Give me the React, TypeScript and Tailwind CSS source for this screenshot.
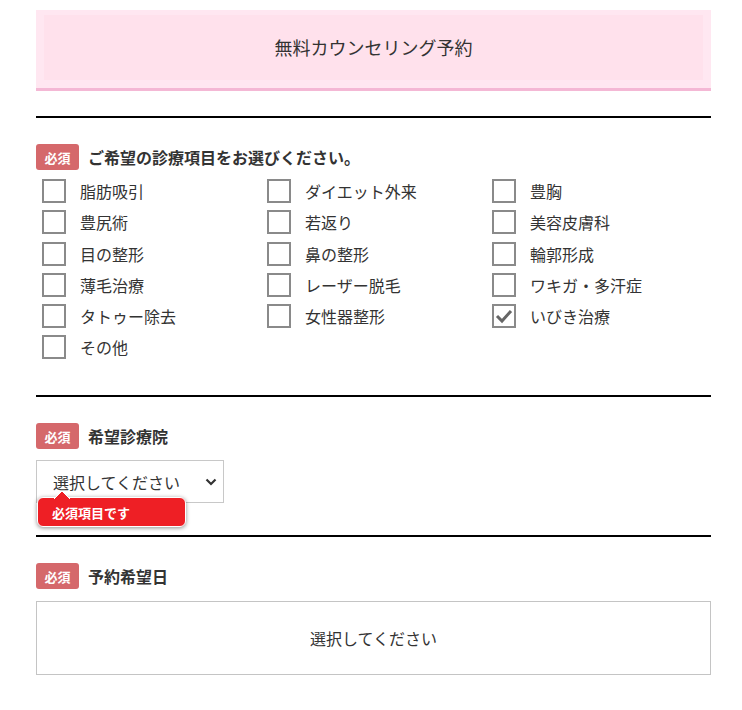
import React from "react";

const items = [
  { label: "脂肪吸引" },
  { label: "ダイエット外来" },
  { label: "豊胸" },
  { label: "豊尻術" },
  { label: "若返り" },
  { label: "美容皮膚科" },
  { label: "目の整形" },
  { label: "鼻の整形" },
  { label: "輪郭形成" },
  { label: "薄毛治療" },
  { label: "レーザー脱毛" },
  { label: "ワキガ・多汗症" },
  { label: "タトゥー除去" },
  { label: "女性器整形" },
  { label: "いびき治療", checked: true },
  { label: "その他" },
];

function Badge() {
  return (
    <span className="inline-flex items-center justify-center w-[43px] h-[26px] rounded-[3px] bg-[#d5686b] text-white text-[13px] font-bold leading-none">
      必須
    </span>
  );
}

function Heading({ text }: { text: string }) {
  return (
    <div className="flex items-center h-[26px] gap-[9px]">
      <Badge />
      <span className="text-[16px] font-bold text-[#333] leading-none">{text}</span>
    </div>
  );
}

function Checkbox({ checked }: { checked?: boolean }) {
  return (
    <span className="w-[24px] h-[24px] border-2 border-[#8a8a8a] bg-white flex items-center justify-center shrink-0">
      {checked && (
        <svg width="20" height="20" viewBox="0 0 20 20">
          <polyline points="3,10 8,15 17,5" fill="none" stroke="#666" strokeWidth="3" />
        </svg>
      )}
    </span>
  );
}

export default function App() {
  return (
    <div
      className="bg-white min-h-[710px] text-[#333]"
      style={{ fontFamily: '"Noto Sans CJK JP", "Noto Sans", sans-serif' }}
    >
      <div className="ml-[36px] w-[675px] pt-[10px]">
        <div className="bg-[#ffe7f1] border-b-[3px] border-[#f4b8d5] pt-[5px] px-[8px] pb-[8px]">
          <div className="bg-[#ffe1ec] h-[65px] flex items-center justify-center text-[18px] text-[#333]">
            無料カウンセリング予約
          </div>
        </div>

        <div className="mt-[25px] h-[2px] bg-black" />

        <div className="pt-[26px] pb-[36px]">
          <Heading text="ご希望の診療項目をお選びください。" />
          <div className="mt-[9px] grid grid-cols-3 gap-y-[7.25px]">
            {items.map((it) => (
              <div key={it.label} className="flex items-center h-[24px] pl-[6px]">
                <Checkbox checked={it.checked} />
                <span className="ml-[14px] text-[16px] text-[#333] leading-none">{it.label}</span>
              </div>
            ))}
          </div>
        </div>

        <div className="h-[2px] bg-black" />

        <div className="pt-[26px] pb-[32px]">
          <Heading text="希望診療院" />
          <div className="relative mt-[11px] w-[188px] h-[43px]">
            <div className="w-full h-full border border-[#c8c8c8] bg-white flex items-center justify-between pl-[16px] pr-[6px]">
              <span className="text-[16px] text-[#333]">選択してください</span>
              <svg width="12" height="8" viewBox="0 0 12 8">
                <polyline points="1.5,1.5 6,6 10.5,1.5" fill="none" stroke="#333" strokeWidth="2.2" />
              </svg>
            </div>
            <div className="absolute left-[1px] top-[37px] w-[149px] h-[30px] rounded-[6px] bg-[#ee1f25] border border-white shadow-[0_1px_4px_rgba(0,0,0,0.45)] flex items-center pl-[14px]">
              <span className="text-white text-[13px] font-bold leading-none">必須項目です</span>
              <svg
                className="absolute left-[16px] top-[-7px]"
                width="16"
                height="8"
                viewBox="0 0 16 8"
              >
                <path d="M0 8 L8 0 L16 8 Z" fill="#ee1f25" />
                <path d="M0 8 L8 0 L16 8" fill="none" stroke="white" strokeWidth="1" />
              </svg>
            </div>
          </div>
        </div>

        <div className="h-[2px] bg-black" />

        <div className="pt-[26px]">
          <Heading text="予約希望日" />
          <div className="mt-[12px] h-[74px] border border-[#c4c4c4] flex items-center justify-center text-[16px] text-[#333]">
            選択してください
          </div>
        </div>
      </div>
    </div>
  );
}
